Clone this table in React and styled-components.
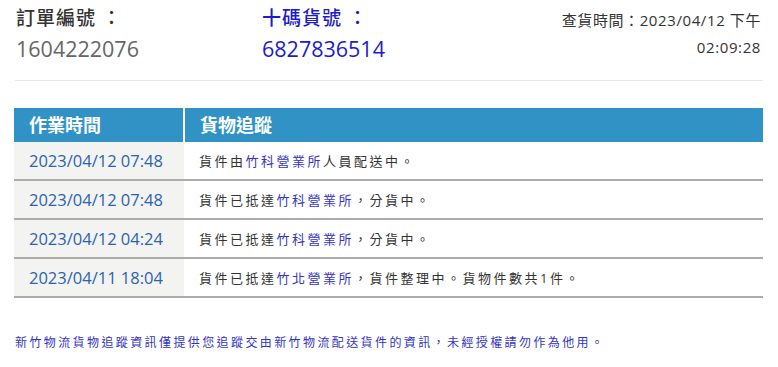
import React from 'react';
import styled, { createGlobalStyle } from 'styled-components';

const GlobalStyle = createGlobalStyle`
  body {
    margin: 0;
    background: #fff;
    font-family: "Open Sans", "Noto Sans CJK TC", sans-serif;
  }
`;

const Page = styled.div`
  padding: 0 15px 0 15px;
  width: 748px;
`;

const Header = styled.div`
  display: flex;
  justify-content: space-between;
  align-items: flex-start;
  padding: 4px 0 14px 1px;
  border-bottom: 1px solid #e8e8e8;
`;

const Fields = styled.div`
  display: grid;
  grid-template-columns: 246px 200px;
`;

const Field = styled.div`
  display: flex;
  flex-direction: column;
  color: ${p => (p.$blue ? '#1c1ccc' : '#333')};
`;

const Label = styled.div`
  font-size: 19px;
  line-height: 28px;
  letter-spacing: 1px;
  font-weight: 500;
`;

const Value = styled.div`
  font-size: 21.5px;
  line-height: 34px;
  color: ${p => (p.$blue ? '#1c1ccc' : '#666')};
`;

const QueryTime = styled.div`
  text-align: right;
  font-size: 15px;
  line-height: 27px;
  letter-spacing: 0.6px;
  color: #333;
  padding-top: 3px;
  margin-right: 2px;
`;

const Table = styled.table`
  margin-top: 27px;
  width: 749px;
  margin-left: -1px;
  border-collapse: collapse;
`;

const Th = styled.th`
  background: #3192c6;
  color: #fff;
  font-weight: bold;
  font-size: 18px;
  text-align: left;
  height: 34px;
  line-height: 34px;
  padding: 0 0 0 15px;
  border-left: ${p => (p.$sep ? '2px solid #fff' : 'none')};
  width: ${p => p.$w || 'auto'};
`;

const Row = styled.tr`
  border-bottom: 2px solid #acacac;
`;

const DateCell = styled.td`
  background: #f3f3f1;
  color: #2b63b2;
  font-size: 16.5px;
  height: 37px;
  padding: 0 0 0 15px;
`;

const DescCell = styled.td`
  color: #333;
  font-size: 13px;
  padding: 0 0 0 15px;
  letter-spacing: 2.5px;
`;

const Office = styled.span`
  color: #3434c4;
`;

const Notice = styled.p`
  margin: 35px 0 0 0;
  color: #3333c2;
  font-size: 12px;
  letter-spacing: 2.4px;
`;

const rows = [
  { time: '2023/04/12 07:48', pre: '貨件由', office: '竹科營業所', post: '人員配送中。' },
  { time: '2023/04/12 07:48', pre: '貨件已抵達', office: '竹科營業所', post: '，分貨中。' },
  { time: '2023/04/12 04:24', pre: '貨件已抵達', office: '竹科營業所', post: '，分貨中。' },
  { time: '2023/04/11 18:04', pre: '貨件已抵達', office: '竹北營業所', post: '，貨件整理中。貨物件數共1件。' },
];

export default function App() {
  return (
    <>
      <GlobalStyle />
      <Page>
        <Header>
          <Fields>
            <Field>
              <Label>訂單編號 ：</Label>
              <Value>1604222076</Value>
            </Field>
            <Field $blue>
              <Label>十碼貨號 ：</Label>
              <Value $blue>6827836514</Value>
            </Field>
          </Fields>
          <QueryTime>
            查貨時間：2023/04/12 下午
            <br />
            02:09:28
          </QueryTime>
        </Header>
        <Table>
          <thead>
            <tr>
              <Th $w="154px">作業時間</Th>
              <Th $sep>貨物追蹤</Th>
            </tr>
          </thead>
          <tbody>
            {rows.map((r, i) => (
              <Row key={i}>
                <DateCell>{r.time}</DateCell>
                <DescCell>
                  {r.pre}
                  <Office>{r.office}</Office>
                  {r.post}
                </DescCell>
              </Row>
            ))}
          </tbody>
        </Table>
        <Notice>新竹物流貨物追蹤資訊僅提供您追蹤交由新竹物流配送貨件的資訊，未經授權請勿作為他用。</Notice>
      </Page>
    </>
  );
}
